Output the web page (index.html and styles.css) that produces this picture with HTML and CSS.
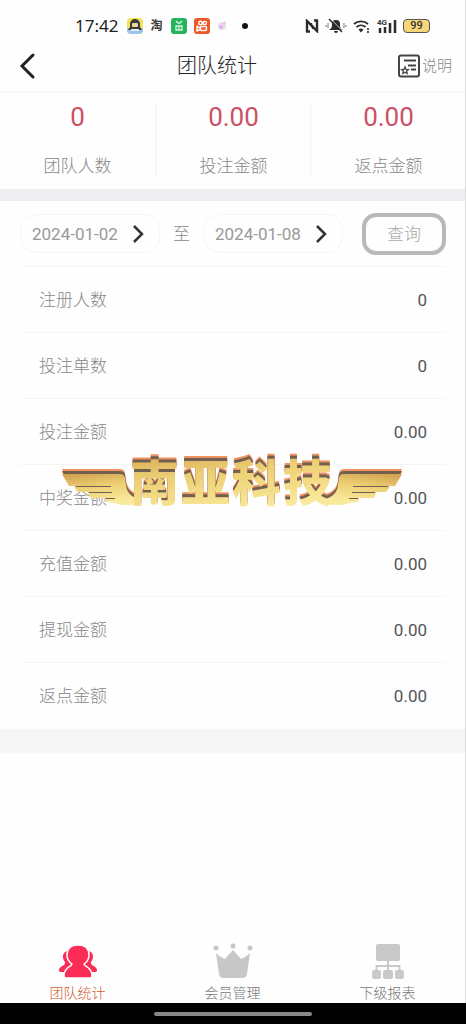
FILE: index.html
```html
<!DOCTYPE html>
<html lang="zh-CN">
<head>
<meta charset="utf-8">
<meta name="viewport" content="width=device-width, initial-scale=1">
<title>团队统计</title>
<link rel="stylesheet" href="styles.css">
</head>
<body>
<div class="app">
  <div class="status">
    <div class="status-group">
      <span class="clock">17:42</span>
      <svg width="16" height="16" viewBox="0 0 16 16"><rect width="16" height="16" rx="4" fill="#f3e25a"/><path d="M0 10h16v2a4 4 0 0 1-4 4H4a4 4 0 0 1-4-4z" fill="#9cc4ea"/><path d="M3 9V6a5 5 0 0 1 10 0v3l2 3H1z" fill="#3d3c35"/><rect x="5" y="5" width="6" height="4" rx="1" fill="#e9d9a0"/><path d="M4 12h8" stroke="#e8edf2" stroke-width="2"/></svg>
      <span class="shop">淘</span>
      <svg width="16" height="16" viewBox="0 0 16 16"><rect width="16" height="16" rx="3" fill="#25b35b"/><path d="M5 3l2 2h2l2-2M5 8h6v4H5zM8 8v4" fill="none" stroke="#d5f5de" stroke-width="1.3"/></svg>
      <svg width="16" height="16" viewBox="0 0 16 16"><rect width="16" height="16" rx="3" fill="#ee5726"/><g fill="none" stroke="#fff" stroke-width="1.4"><circle cx="6.5" cy="5" r="1.8"/><circle cx="10.8" cy="5" r="1.6"/><rect x="6.5" y="8.5" width="6" height="4" rx="1"/><path d="M3 8.5l3 1.2v2L3 13z"/></g></svg>
      <svg width="10" height="10" viewBox="0 0 10 10"><circle cx="5" cy="5" r="4" fill="#eadcf3"/><circle cx="4" cy="6" r="2" fill="#dcb9e2"/><path d="M6 3l3-2" stroke="#f2c8b8" stroke-width="2"/></svg>
      <span class="dot"></span>
    </div>
    <div class="status-group right">
      <svg width="14" height="14" viewBox="0 0 14 14"><g fill="none" stroke="#2b2b2b" stroke-width="2.400"><path d="M2 13V2l6 6v2"/><path d="M12 1v11L6 6V4"/><path d="M1 12.500h4M9 1.500h4"/></g></svg>
      <svg width="22" height="16" viewBox="0 0 22 16"><path d="M4 12c3-2 3-3 3-6a4 4 0 0 1 8 0c0 3 0 4 3 6zM9 13h4a2 2 0 0 1-4 0z" fill="#2b2b2b"/><path d="M5.500 1l12 12" stroke="#fff" stroke-width="1"/><path d="M4 1l13 13" stroke="#2b2b2b" stroke-width="1.500"/><path d="M3 5v5M1 7v2M19 5v5M21 7v2" stroke="#777"/></svg>
      <svg width="18" height="16" viewBox="0 0 18 16"><g fill="none" stroke="#2b2b2b" stroke-width="1.8"><path d="M1 6a10.5 10.5 0 0 1 14 0M3.500 9a7 7 0 0 1 9 0"/></g><path d="M5.500 11.500a4 4 0 0 1 5 0L8 14.500z" fill="#2b2b2b"/><path d="M15 10v5" stroke="#555" stroke-width="2" stroke-dasharray="2 1"/></svg>
      <svg width="20" height="18" viewBox="0 0 20 18"><text x="0" y="8" class="net">4G</text><path d="M3 16v-5M8 16v-6M13 16V6M18 16V3" stroke="#2b2b2b" stroke-width="2.500"/></svg>
      <span class="battery">99</span>
    </div>
  </div>

  <header class="header">
    <button class="back" aria-label="返回"><svg width="18" height="28" viewBox="0 0 18 28"><path d="M15 3L4 14l11 11" fill="none" stroke="#222" stroke-width="3" stroke-linecap="round"/></svg></button>
    <h1 class="title">团队统计</h1>
    <button class="help"><svg width="22" height="24" viewBox="0 0 22 24"><g fill="none" stroke="#444"><rect x="1" y="1.500" width="20" height="21" rx="2" stroke-width="2"/><path d="M6 6.500h12M10 11.500h8M13 15.500h5" stroke-width="1.800"/><path d="M7 13l1 2.300 2.500.2-1.900 1.600.6 2.400L7 18.200l-2.200 1.300.6-2.400-1.900-1.600 2.500-.2z" stroke-width="1.300"/></g></svg><span>说明</span></button>
  </header>

  <section class="stats">
    <div class="stat"><strong>0</strong><span>团队人数</span></div>
    <div class="stat"><strong>0.00</strong><span>投注金额</span></div>
    <div class="stat"><strong>0.00</strong><span>返点金额</span></div>
  </section>

  <main class="report">
    <div class="filter">
      <button class="date"><span>2024-01-02</span><svg width="12" height="20" viewBox="0 0 12 20"><path d="M2 2l8 8-8 8" fill="none" stroke="#333" stroke-width="2.500"/></svg></button>
      <span class="to">至</span>
      <button class="date"><span>2024-01-08</span><svg width="12" height="20" viewBox="0 0 12 20"><path d="M2 2l8 8-8 8" fill="none" stroke="#333" stroke-width="2.500"/></svg></button>
      <button class="query">查询</button>
    </div>
    <dl class="rows">
      <div class="row"><dt>注册人数</dt><dd>0</dd></div>
      <div class="row"><dt>投注单数</dt><dd>0</dd></div>
      <div class="row"><dt>投注金额</dt><dd>0.00</dd></div>
      <div class="row"><dt>中奖金额</dt><dd>0.00</dd></div>
      <div class="row"><dt>充值金额</dt><dd>0.00</dd></div>
      <div class="row"><dt>提现金额</dt><dd>0.00</dd></div>
      <div class="row"><dt>返点金额</dt><dd>0.00</dd></div>
    </dl>
    <svg class="brand" width="344" height="80" viewBox="0 -8 344 80">
      <defs>
        <linearGradient id="gold" x1="0" y1="0" x2="0.300" y2="1"><stop offset="0" stop-color="#cf9f4c"/><stop offset=".5" stop-color="#eed075"/><stop offset="1" stop-color="#fae99b"/></linearGradient>
        <g id="wing">
          <path d="M1 23h58c6 0 5 5 6 11 1 7 4 11 12 14v5c-9 2-19 1-23-1-3-1-6-1-9-1l-1-3h10v-1H29l-2-5h24v-1H17l-4-5h37v-1H8z"/>
        </g>
      </defs>
      <g class="raised" fill="url(#gold)">
        <use href="#wing"/>
        <use href="#wing" transform="translate(342 0) scale(-1 1)"/>
        <text x="69 120 171 222" y="50" class="brand-text">南亚科技</text>
      </g>
    </svg>
  </main>
  <div class="band"></div>

  <nav class="tabs">
    <a class="tab active" href="#team"><svg width="40" height="36" viewBox="0 0 40 36"><g fill="#fb2c55"><path d="M12 8C5 7 3 14 7 19c1 4-6 4-6 8 0 2 1 2 3 2h5l6-6zM28 8c7-1 9 6 5 11-1 4 6 4 6 8 0 2-1 2-3 2h-5l-6-6z"/><path d="M20 2c-7 0-11 4-11 10 0 4 2 7 5 9 0 3-7 2-8 11 0 3 1 3 3 3h22c2 0 3 0 3-3-1-9-8-8-8-11 3-2 5-5 5-9 0-6-4-10-11-10z" stroke="#fff" stroke-width="1.500"/></g></svg><span>团队统计</span></a>
    <a class="tab" href="#members"><svg width="40" height="36" viewBox="0 0 40 36"><g fill="#c7c7c7"><circle cx="3" cy="5" r="2.500"/><circle cx="20" cy="3" r="2.500"/><circle cx="37" cy="5" r="2.500"/><path d="M3 10c3 3 6 5 9 6l8-9 8 9c3-1 6-3 9-6l-3 21c-1 3-2 4-5 4H11c-3 0-4-1-5-4z"/></g></svg><span>会员管理</span></a>
    <a class="tab" href="#reports"><svg width="40" height="36" viewBox="0 0 40 36"><g fill="#c9c9c9"><rect x="8" y="1" width="24" height="17" rx="2"/><rect x="4" y="27" width="9" height="9" rx="2"/><rect x="15" y="27" width="10" height="9" rx="2"/><rect x="27" y="27" width="9" height="9" rx="2"/></g><path d="M20 17v11M8.500 28v-5h23v5" fill="none" stroke="#c9c9c9" stroke-width="2"/></svg><span>下级报表</span></a>
  </nav>
</div>
<div class="system"><span class="handle"></span></div>
</body>
</html>
```

FILE: styles.css
```css
* { box-sizing: border-box; }
body {
  margin: 0;
  min-height: 100vh;
  display: flex;
  flex-direction: column;
  background: #fff;
  font-family: Roboto, "Noto Sans CJK SC", sans-serif;
  font-size: 17px;
  font-weight: 300;
  line-height: 24px;
  color: #888;
}
button {
  margin: 0;
  padding: 0;
  border: 0;
  background: none;
  font: inherit;
  color: inherit;
}
svg { display: block; flex: none; }
.app {
  flex: 1;
  display: flex;
  flex-direction: column;
  background: #fefefe;
  border-right: 1px solid #ddd;
}
.status {
  display: flex;
  justify-content: space-between;
  align-items: center;
  height: 40px;
  padding: 12px 35px 0 75px;
}
.status-group { display: flex; align-items: center; gap: 7px; }
.status-group.right { gap: 6px; }
.clock {
  margin-right: 2px;
  font-family: "Noto Sans", sans-serif;
  font-size: 17px;
  font-weight: 400;
  color: #222;
}
.shop { font-size: 12px; font-weight: 700; color: #333; margin-right: 2px; }
.dot { width: 6px; height: 6px; margin-left: 8px; border-radius: 50%; background: #111; }
.net { font: 700 8px Roboto, sans-serif; fill: #333; }
.battery {
  width: 27px;
  height: 14px;
  border: 1px solid #555;
  border-radius: 4px;
  background: #f5d679;
  color: #333;
  font-size: 11px;
  font-weight: 500;
  line-height: 12px;
  text-align: center;
}
.header {
  display: flex;
  justify-content: space-between;
  align-items: center;
  height: 53px;
  padding: 0 13px 0 18px;
  border-bottom: 2px solid #f7f7f7;
}
.title { margin: 0; font-size: 20px; font-weight: 300; line-height: 28px; color: #222; }
.help { display: flex; align-items: center; gap: 2px; font-size: 15px; }
.stats {
  display: grid;
  grid-template-columns: repeat(3, 1fr);
  height: 108px;
  padding: 9px 0 12px;
  border-bottom: 12px solid #efeff1;
}
.stat { display: flex; flex-direction: column; align-items: center; gap: 22px; }
.stat + .stat { border-left: 2px solid #f8f8f8; }
.stat strong { font-size: 26px; font-weight: 400; line-height: 30px; color: #cc5065; }
.report { position: relative; padding: 0 19px 0 20px; }
.filter {
  display: flex;
  align-items: center;
  height: 66px;
  border-bottom: 1px solid #f5f5f5;
}
.date {
  display: flex;
  align-items: center;
  justify-content: space-between;
  width: 140px;
  height: 39px;
  padding: 0 15px 0 11px;
  border: 1px solid #f5f5f5;
  border-radius: 16px;
  font-weight: 400;
  color: #999;
}
.to { flex: 1; text-align: center; }
.query {
  width: 84px;
  height: 42px;
  margin-left: 19px;
  border: 4px solid #b9b9b9;
  border-radius: 14px;
  color: #aaa;
}
.rows { margin: 0; }
.row {
  display: flex;
  align-items: center;
  justify-content: space-between;
  height: 66px;
  padding: 0 19px;
  border-bottom: 1px solid #f5f5f5;
}
.row:last-child { border-bottom: 0; }
.row dd { margin: 0; font-weight: 400; color: #555; }
.brand { position: absolute; left: 50%; top: 242px; transform: translateX(-50%); overflow: visible; }
.raised { filter: drop-shadow(0 -3px 0 #71604f) drop-shadow(0 -2px 0 #ef9262); }
.brand-text { font: 900 49px "Noto Sans CJK SC", sans-serif; }
.band { height: 24px; background: #f6f6f6; }
.tabs {
  display: grid;
  grid-template-columns: repeat(3, 1fr);
  margin-top: auto;
  height: 60px;
}
.tab {
  display: flex;
  flex-direction: column;
  align-items: center;
  gap: 4px;
  font-size: 14px;
  line-height: 20px;
  color: #777;
  text-decoration: none;
}
.tab.active { color: #d05a30; }
.system {
  display: flex;
  align-items: center;
  justify-content: center;
  height: 21px;
  background: #000;
}
.handle { width: 34%; height: 4px; border-radius: 2px; background: #888; }
```
